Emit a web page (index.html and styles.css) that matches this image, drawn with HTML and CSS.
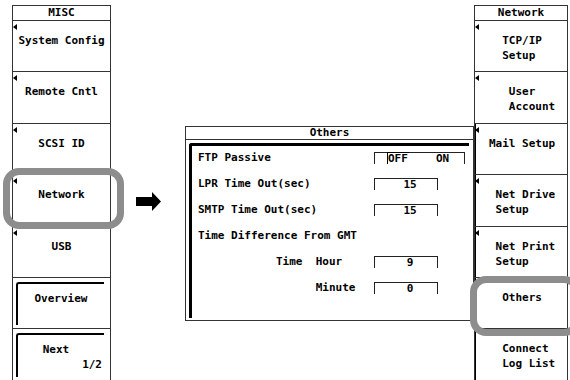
FILE: index.html
```html
<!DOCTYPE html>
<html lang="en">
<head>
    <meta charset="UTF-8">
    <title>MISC - Network - Others</title>
    <link rel="stylesheet" href="styles.css">
</head>
<body>
    <div class="screen">
        <div class="panel left-panel">
            <div class="panel-title">MISC</div>
            <div class="key"><span class="mark"></span><span class="label">System Config</span></div>
            <div class="key"><span class="mark"></span><span class="label">Remote Cntl</span></div>
            <div class="key"><span class="mark"></span><span class="label">SCSI ID</span></div>
            <div class="key"><span class="mark"></span><span class="label">Network</span></div>
            <div class="key"><span class="mark"></span><span class="label">USB</span></div>
            <div class="key plain">
                <div class="inset"><span class="label">Overview</span></div>
            </div>
            <div class="key plain">
                <div class="inset next"><span class="label">Next</span><span class="page">1/2</span></div>
            </div>
            <div class="ring ring-left"></div>
        </div>

        <div class="middle">
            <svg class="pointer" width="26" height="19" viewBox="0 0 26 19">
                <polygon points="0,5 16,5 16,0 25,9.5 16,19 16,14 0,14" fill="#000"/>
            </svg>

            <div class="dialog">
                <div class="dialog-title">Others</div>
                <div class="dialog-body">
                    <div class="row">
                        <span class="row-label">FTP Passive</span>
                        <span class="field wide"><span class="opt sel">OFF</span><span class="opt">ON</span></span>
                    </div>
                    <div class="row">
                        <span class="row-label">LPR Time Out(sec)</span>
                        <span class="field num">15</span>
                    </div>
                    <div class="row">
                        <span class="row-label">SMTP Time Out(sec)</span>
                        <span class="field num">15</span>
                    </div>
                    <div class="row">
                        <span class="row-label">Time Difference From GMT</span>
                    </div>
                    <div class="row">
                        <span class="row-label sub">Time  Hour</span>
                        <span class="field num">9</span>
                    </div>
                    <div class="row">
                        <span class="row-label sub">      Minute</span>
                        <span class="field num">0</span>
                    </div>
                </div>
            </div>
        </div>

        <div class="panel right-panel">
            <div class="panel-title">Network</div>
            <div class="key"><span class="mark"></span><span class="label">  TCP/IP
  Setup</span></div>
            <div class="key"><span class="mark"></span><span class="label">   User
   Account</span></div>
            <div class="key heavy"><span class="mark"></span><span class="label">Mail Setup</span></div>
            <div class="key heavy"><span class="mark"></span><span class="label"> Net Drive
 Setup</span></div>
            <div class="key heavy"><span class="mark"></span><span class="label"> Net Print
 Setup</span></div>
            <div class="key heavy"><span class="mark"></span><span class="label">  Others</span></div>
            <div class="key heavy"><span class="label">  Connect
  Log List</span></div>
            <div class="ring ring-right"></div>
        </div>
    </div>
</body>
</html>
```

FILE: styles.css
```css
body {
    margin: 0;
    background-color: #fff;
    color: #000;
    font-family: "DejaVu Sans Mono", "Liberation Mono", monospace;
    font-weight: bold;
    font-size: 11px;
}

.screen {
    display: flex;
    align-items: flex-start;
    padding-left: 12px;
    height: 380px;
    overflow: hidden;
}

/* soft key columns */
.panel {
    position: relative;
    display: flex;
    flex-direction: column;
    flex: none;
    margin-top: 5px;
    border-left: 1px solid #333;
    border-right: 1px solid #333;
    box-sizing: border-box;
}

.left-panel {
    width: 99px;
}

.right-panel {
    width: 94px;
}

.panel-title {
    height: 16px;
    box-sizing: border-box;
    border-top: 1px solid #333;
    border-bottom: 1px solid #333;
    text-align: center;
    line-height: 14px;
}

.key {
    position: relative;
    flex: none;
    height: 51.4px;
    box-sizing: border-box;
    border-bottom: 1px solid #333;
    padding-top: 13px;
    text-align: center;
    line-height: 14px;
}

.right-panel .key {
    text-align: left;
    padding-left: 14px;
    padding-top: 12px;
    line-height: 15px;
}

.right-panel .label {
    white-space: pre;
}

.key.heavy {
    box-shadow: inset 1px 0 0 #000;
}

.mark {
    position: absolute;
    left: 0;
    top: 3px;
    width: 0;
    height: 0;
    border-top: 3px solid transparent;
    border-bottom: 3px solid transparent;
    border-right: 4px solid #000;
}

.key.plain {
    padding: 4px 6px 3px 3px;
}

.inset {
    height: 100%;
    box-sizing: border-box;
    border-top: 2px solid #000;
    border-left: 2px solid #000;
    border-top-left-radius: 3px;
    padding-top: 8px;
}

.inset.next .label {
    display: block;
    padding-right: 10px;
}

.page {
    display: block;
    text-align: right;
    padding-right: 2px;
    line-height: 15px;
}

/* grey callout rings */
.ring {
    position: absolute;
    border: 7px solid #8d8d8d;
    border-radius: 16px;
    box-sizing: border-box;
}

.ring-left {
    left: -10px;
    top: 163px;
    width: 121px;
    height: 61px;
}

.ring-right {
    left: -5px;
    top: 271px;
    width: 110px;
    height: 60px;
}

/* centre area */
.middle {
    display: flex;
    align-items: flex-start;
    width: 363px;
    flex: none;
}

.pointer {
    margin-left: 25px;
    margin-top: 192px;
    flex: none;
}

.dialog {
    margin-left: 23px;
    margin-top: 126px;
    width: 289px;
    height: 195px;
    box-sizing: border-box;
    border: 1px solid #333;
    display: flex;
    flex-direction: column;
}

.dialog-title {
    height: 13px;
    box-sizing: border-box;
    border-bottom: 1px solid #333;
    text-align: center;
    line-height: 12px;
}

.dialog-body {
    flex: 1;
    margin: 3px 4px 2px 3px;
    border-top: 3px solid #000;
    border-left: 3px solid #000;
    border-top-left-radius: 3px;
}

.row {
    display: flex;
    align-items: flex-start;
    height: 26px;
    box-sizing: border-box;
    padding: 5px 0 0 6px;
    line-height: 14px;
}

.row-label {
    width: 176px;
    flex: none;
    white-space: pre;
}

.row-label.sub {
    padding-left: 78px;
    width: 98px;
}

.field {
    display: flex;
    margin-top: 1px;
    height: 12px;
    box-sizing: border-box;
    border: 1px solid #222;
    border-bottom: none;
    line-height: 11px;
}

.field.wide {
    width: 91px;
    padding-left: 12px;
}

.field.num {
    width: 64px;
    justify-content: center;
    padding-left: 8px;
}

.opt {
    padding: 0 1px;
}

.opt.sel {
    border-left: 1px solid #000;
    box-shadow: 0 -1px 0 #000;
    padding-left: 0;
    margin-right: 26px;
}
```
